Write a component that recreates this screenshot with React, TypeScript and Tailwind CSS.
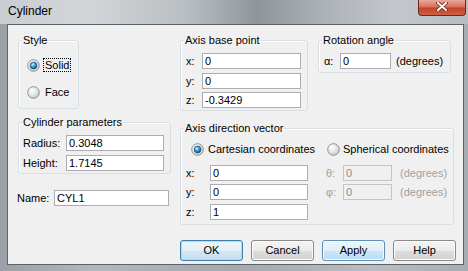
import React from "react";

function Radio({ checked }: { checked?: boolean }) {
  return (
    <svg width="13" height="13" viewBox="0 0 13 13" className="shrink-0">
      <defs>
        <radialGradient id="rbase" cx="35%" cy="30%" r="75%">
          <stop offset="0%" stopColor="#ffffff" />
          <stop offset="60%" stopColor="#e2e3e4" />
          <stop offset="100%" stopColor="#c4c6c8" />
        </radialGradient>
        <radialGradient id="rdot" cx="40%" cy="35%" r="70%">
          <stop offset="0%" stopColor="#c8f4ff" />
          <stop offset="45%" stopColor="#3ea4d8" />
          <stop offset="100%" stopColor="#0e3f66" />
        </radialGradient>
      </defs>
      <circle cx="6.5" cy="6.5" r="5.8" fill="url(#rbase)" stroke="#8d9094" strokeWidth="1" />
      {checked && <circle cx="6.5" cy="6.5" r="3.4" fill="url(#rdot)" stroke="#1d4f77" strokeWidth="0.7" />}
    </svg>
  );
}

function Group({ title, className, children }: { title: string; className: string; children: React.ReactNode }) {
  return (
    <fieldset className={`rounded-[3px] border border-[#d5dfe5] shadow-[inset_1px_1px_0_#ffffff] ${className}`}>
      <legend className="ml-[3px] px-[1px] leading-[13px]">{title}</legend>
      {children}
    </fieldset>
  );
}

function Field({ value, width, disabled }: { value: string; width: string; disabled?: boolean }) {
  return (
    <div
      className={`h-[16px] border pl-[2px] leading-[14px] ${width} ${
        disabled ? "border-[#c3c6c9] bg-[#f0f0f0] text-[#8d8d8d]" : "border-[#abadb3] bg-white text-black"
      }`}
    >
      {value}
    </div>
  );
}

function Button({ label, tone }: { label: string; tone?: "default" | "hot" }) {
  const look =
    tone === "default"
      ? "border-[#3c7fb1] bg-[linear-gradient(180deg,#f1f7fb_0%,#e4eff7_50%,#d3e6f3_51%,#c6deef_100%)] shadow-[inset_0_0_0_1px_#a9dcf6]"
      : tone === "hot"
      ? "border-[#5e8fb5] bg-[linear-gradient(180deg,#edf6fc_0%,#dfeff9_50%,#cce6f6_51%,#bcdcf1_100%)] shadow-[inset_0_0_0_1px_#f4fafd]"
      : "border-[#8a8a8a] bg-[linear-gradient(180deg,#f4f4f4_0%,#ebebeb_50%,#dddddd_51%,#d2d2d2_100%)] shadow-[inset_0_0_0_1px_#fbfbfb]";
  return (
    <div className={`flex h-[21px] w-[63px] items-center justify-center rounded-[3px] border ${look}`}>
      {label}
    </div>
  );
}

export default function App() {
  return (
    <div className="flex h-[271px] w-[468px] flex-col overflow-hidden bg-[linear-gradient(90deg,#9ba1a7_0%,#b3b8bd_20%,#a3a9ae_50%,#b8bdc1_80%,#a7adb2_100%)] font-['Liberation_Sans',Arial,sans-serif] text-[11px] text-black">
      {/* Title bar */}
      <div className="flex h-[24px] shrink-0 items-start justify-between bg-[linear-gradient(90deg,#c9cdd1_0%,#d3d6d9_18%,#b9bec2_40%,#8f959a_55%,#aeb3b8_70%,#c4c8cc_85%,#b7bcc0_100%)] pr-[2px]">
        <span className="pl-[8px] pt-[4px] text-[12px] leading-[15px] text-black">Cylinder</span>
        <div className="flex h-[16px] w-[48px] items-center justify-center rounded-b-[4px] border border-t-0 border-[#6b2a1e] bg-[linear-gradient(180deg,#e9a89a_0%,#d9725e_45%,#c4432b_55%,#cf5f44_100%)] pb-[3px]">
          <svg width="12" height="9" viewBox="0 0 12 9">
            <path d="M2 1 L10 8 M10 1 L2 8" stroke="#6a2216" strokeWidth="3.6" strokeLinecap="round" />
            <path d="M2 1 L10 8 M10 1 L2 8" stroke="#ffffff" strokeWidth="2" strokeLinecap="round" />
          </svg>
        </div>
      </div>

      <div className="flex">
        <div className="w-[7px] shrink-0" />
        {/* Client area */}
        <div className="flex h-[241px] w-[457px] shrink-0 border border-[#5d6267] bg-[#f0f0f0] pl-[10px] pt-[9px]">
          {/* Left column */}
          <div className="flex w-[153px] flex-col">
            <Group title="Style" className="w-[61px] pb-[8px]">
              <div className="mt-[10px] flex h-[16px] items-center pl-[8px]">
                <Radio checked />
                <span className="ml-[3px] border border-dotted border-black px-[1px] leading-[12px]">Solid</span>
              </div>
              <div className="mt-[11px] flex h-[16px] items-center pl-[8px]">
                <Radio />
                <span className="ml-[5px]">Face</span>
              </div>
            </Group>

            <Group title="Cylinder parameters" className="mt-[7px] w-[153px] pb-[2px]">
              <div className="mt-[6px] flex flex-col gap-[3px] pl-[4px]">
                <div className="flex items-center">
                  <span className="w-[43px]">Radius:</span>
                  <Field value="0.3048" width="w-[98px]" />
                </div>
                <div className="flex items-center">
                  <span className="w-[43px]">Height:</span>
                  <Field value="1.7145" width="w-[98px]" />
                </div>
              </div>
            </Group>

            <div className="-ml-[1px] mt-[16px] flex items-center">
              <span className="w-[37px]">Name:</span>
              <Field value="CYL1" width="w-[115px]" />
            </div>
          </div>

          {/* Right column */}
          <div className="ml-[9px] flex w-[276px] flex-col">
            <div className="flex items-start">
              <Group title="Axis base point" className="w-[128px] pb-[1px]">
                <div className="mt-[6px] flex flex-col gap-[3px] pl-[5px]">
                  {[
                    ["x:", "0"],
                    ["y:", "0"],
                    ["z:", "-0.3429"],
                  ].map(([l, v]) => (
                    <div key={l} className="flex items-center">
                      <span className="w-[16px]">{l}</span>
                      <Field value={v} width="w-[99px]" />
                    </div>
                  ))}
                </div>
              </Group>

              <Group title="Rotation angle" className="ml-[10px] w-[133px] pb-[2px]">
                <div className="mt-[6px] flex items-center pl-[5px]">
                  <span className="w-[16px]">α:</span>
                  <Field value="0" width="w-[51px]" />
                  <span className="ml-[5px]">(degrees)</span>
                </div>
              </Group>
            </div>

            <Group title="Axis direction vector" className="mt-[11px] w-[274px] pb-[4px]">
              <div className="mt-[7px] flex h-[16px] items-center pl-[10px]">
                <div className="flex w-[136px] items-center">
                  <Radio checked />
                  <span className="ml-[4px]">Cartesian coordinates</span>
                </div>
                <Radio />
                <span className="ml-[3px]">Spherical coordinates</span>
              </div>
              <div className="mt-[7px] flex flex-col gap-[3px] pl-[5px]">
                <div className="flex items-center">
                  <span className="w-[24px]">x:</span>
                  <Field value="0" width="w-[98px]" />
                  <span className="ml-[18px] w-[17px] text-[#a0a0a0]">θ:</span>
                  <Field value="0" width="w-[49px]" disabled />
                  <span className="ml-[8px] text-[#a0a0a0]">(degrees)</span>
                </div>
                <div className="flex items-center">
                  <span className="w-[24px]">y:</span>
                  <Field value="0" width="w-[98px]" />
                  <span className="ml-[18px] w-[17px] text-[#a0a0a0]">φ:</span>
                  <Field value="0" width="w-[49px]" disabled />
                  <span className="ml-[8px] text-[#a0a0a0]">(degrees)</span>
                </div>
                <div className="flex items-center">
                  <span className="w-[24px]">z:</span>
                  <Field value="1" width="w-[98px]" />
                </div>
              </div>
            </Group>

            <div className="mt-[15px] flex gap-[8px]">
              <Button label="OK" tone="default" />
              <Button label="Cancel" />
              <Button label="Apply" tone="hot" />
              <Button label="Help" />
            </div>
          </div>
        </div>
      </div>
    </div>
  );
}
